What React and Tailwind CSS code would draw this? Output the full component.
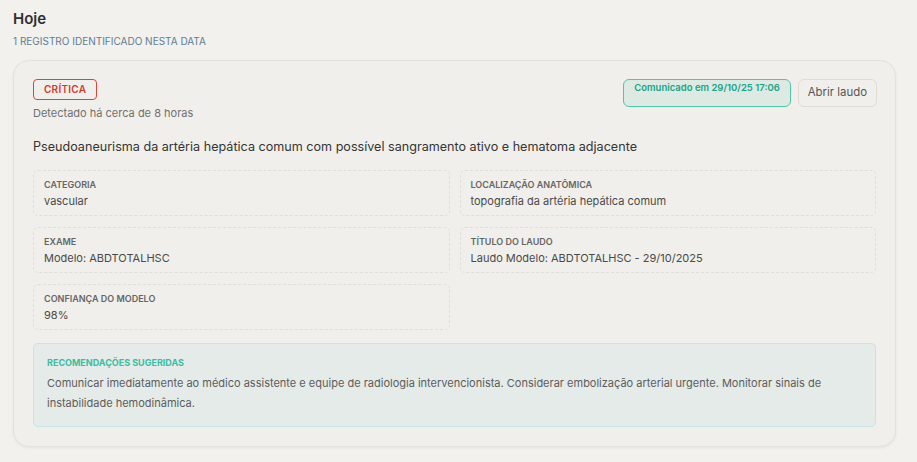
const fields = [
  { label: 'Categoria', value: 'vascular' },
  { label: 'Localização anatômica', value: 'topografia da artéria hepática comum' },
  { label: 'Exame', value: 'Modelo: ABDTOTALHSC' },
  { label: 'Título do laudo', value: 'Laudo Modelo: ABDTOTALHSC - 29/10/2025' },
  { label: 'Confiança do modelo', value: '98%' },
];

export default function App() {
  return (
    <div
      className="min-h-screen bg-[#f2f1ee] px-[13px] pt-[9px] pb-4 text-[#3a3a3a]"
      style={{ fontFamily: 'Inter, "Noto Sans", sans-serif' }}
    >
      <h2 className="text-[15px] font-semibold leading-[20px] text-[#2f2f2f]">Hoje</h2>
      <p className="mt-[5px] text-[10px] uppercase leading-[14px] text-[#5f7d93]">
        1 registro identificado nesta data
      </p>

      <div className="mt-[12px] w-[883px] rounded-[16px] border border-[#e4e2dd] bg-[#f0efeb] pl-[19px] pr-[18px] pt-[18px] pb-[19px] shadow-[0_1px_3px_rgba(0,0,0,0.06)]">
        <div className="flex items-start justify-between">
          <div>
            <div className="flex">
              <span className="flex h-[21px] items-center rounded-[4px] border border-[#d9463a] px-[10px] text-[10px] font-semibold tracking-wide text-[#d23b2f]">
                CRÍTICA
              </span>
            </div>
            <p className="mt-[5px] text-[11px] leading-[16px] text-[#707070]">
              Detectado há cerca de 8 horas
            </p>
          </div>
          <div className="flex items-start gap-[7px]">
            <span className="h-[28px] rounded-[6px] border border-[#52c6aa] bg-[#dde9e3] px-[10px] pt-[1px] text-[9.5px] font-semibold leading-[14px] text-[#21a283]">
              Comunicado em 29/10/25 17:06
            </span>
            <button className="h-[28px] rounded-[6px] border border-[#dedcd7] bg-[#f0efeb] px-[9px] text-[11.4px] text-[#555]">
              Abrir laudo
            </button>
          </div>
        </div>

        <p className="mt-[16px] text-[12.6px] leading-[20px] text-[#353535]">
          Pseudoaneurisma da artéria hepática comum com possível sangramento ativo e hematoma adjacente
        </p>

        <div className="mt-[13px] grid grid-cols-2 gap-x-[10px] gap-y-[11px] pr-px">
          {fields.map((f) => (
            <div
              key={f.label}
              className="h-[46px] rounded-[5px] border border-dashed border-[#e0ded9] px-[10px] pt-[8px]"
            >
              <p className="text-[9px] font-semibold uppercase leading-[12px] text-[#666]">{f.label}</p>
              <p className="mt-[2px] text-[11px] leading-[16px] text-[#4a4a4a]">{f.value}</p>
            </div>
          ))}
        </div>

        <div className="mt-[13px] mr-px rounded-[5px] border border-[#c7e3e3] bg-[#e5ebe9] px-[13px] pt-[13px] pb-[13px]">
          <p className="text-[9px] font-bold uppercase leading-[12px] text-[#3cbca0]">Recomendações sugeridas</p>
          <p className="mt-[4px] text-[11px] leading-[20px] text-[#5c5c5c]">
            Comunicar imediatamente ao médico assistente e equipe de radiologia intervencionista. Considerar embolização arterial urgente. Monitorar sinais de instabilidade hemodinâmica.
          </p>
        </div>
      </div>
    </div>
  );
}
